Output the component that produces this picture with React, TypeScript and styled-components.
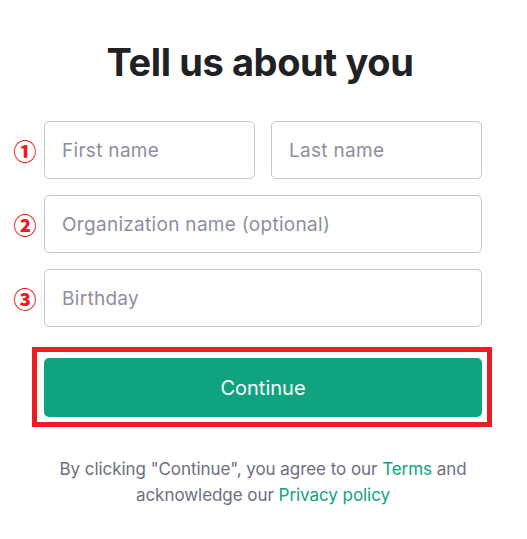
import React from "react";
import styled, { createGlobalStyle } from "styled-components";

const Global = createGlobalStyle`
  html, body { margin: 0; padding: 0; background: #ffffff; }
  body { font-family: Inter, "Noto Sans", sans-serif; }
  * { box-sizing: border-box; }
`;

const Page = styled.div`
  width: 527px;
  height: 539px;
  display: flex;
  flex-direction: column;
  align-items: stretch;
  padding: 36px 45px 0 0;
`;

const Title = styled.h1`
  margin: 0 0 33px 38px;
  font-size: 38px;
  line-height: 52px;
  font-weight: 700;
  color: #202123;
  text-align: center;
  letter-spacing: -0.4px;
`;

const Rows = styled.div`
  display: flex;
  flex-direction: column;
  gap: 16px;
`;

const Row = styled.div`
  display: grid;
  grid-template-columns: 44px 1fr;
  align-items: center;
`;

const Marker = styled.span`
  font-family: "Noto Sans CJK JP", sans-serif;
  font-size: 23px;
  font-weight: 900;
  line-height: 1;
  color: #ec1c24;
  text-align: center;
  padding-left: 6px;
`;

const Fields = styled.div<{ $cols: number }>`
  display: grid;
  grid-template-columns: repeat(${(p) => p.$cols}, 1fr);
  gap: 16px;
`;

const Input = styled.input`
  height: 58px;
  width: 100%;
  border: 1px solid #c2c8d0;
  border-radius: 5px;
  padding: 0 17px;
  font-family: Inter, "Noto Sans", sans-serif;
  font-size: 19px;
  letter-spacing: 0.3px;
  color: #2d333a;
  outline: none;
  &::placeholder { color: #8e8ea0; }
`;

const Highlight = styled.div`
  margin: 20px -10px 0 32px;
  border: 5px solid #ec1c24;
  padding: 6px 5px 5px 7px;
`;

const Button = styled.button`
  display: block;
  width: 100%;
  height: 59px;
  border: none;
  border-radius: 5px;
  background: #10a37f;
  color: #ffffff;
  font-family: Inter, "Noto Sans", sans-serif;
  font-size: 20px;
  font-weight: 400;
`;

const Legal = styled.p`
  margin: 29px 0 0 44px;
  font-size: 17px;
  line-height: 26px;
  color: #6e6e80;
  text-align: center;
  letter-spacing: -0.05px;
`;

const Link = styled.a`
  color: #10a37f;
  text-decoration: none;
`;

export default function App() {
  return (
    <>
      <Global />
      <Page>
        <Title>Tell us about you</Title>
        <Rows>
          <Row>
            <Marker>①</Marker>
            <Fields $cols={2}>
              <Input placeholder="First name" />
              <Input placeholder="Last name" />
            </Fields>
          </Row>
          <Row>
            <Marker>②</Marker>
            <Fields $cols={1}>
              <Input placeholder="Organization name (optional)" />
            </Fields>
          </Row>
          <Row>
            <Marker>③</Marker>
            <Fields $cols={1}>
              <Input placeholder="Birthday" />
            </Fields>
          </Row>
        </Rows>
        <Highlight>
          <Button>Continue</Button>
        </Highlight>
        <Legal>
          By clicking "Continue", you agree to our <Link href="#">Terms</Link> and
          <br />
          acknowledge our <Link href="#">Privacy policy</Link>
        </Legal>
      </Page>
    </>
  );
}
